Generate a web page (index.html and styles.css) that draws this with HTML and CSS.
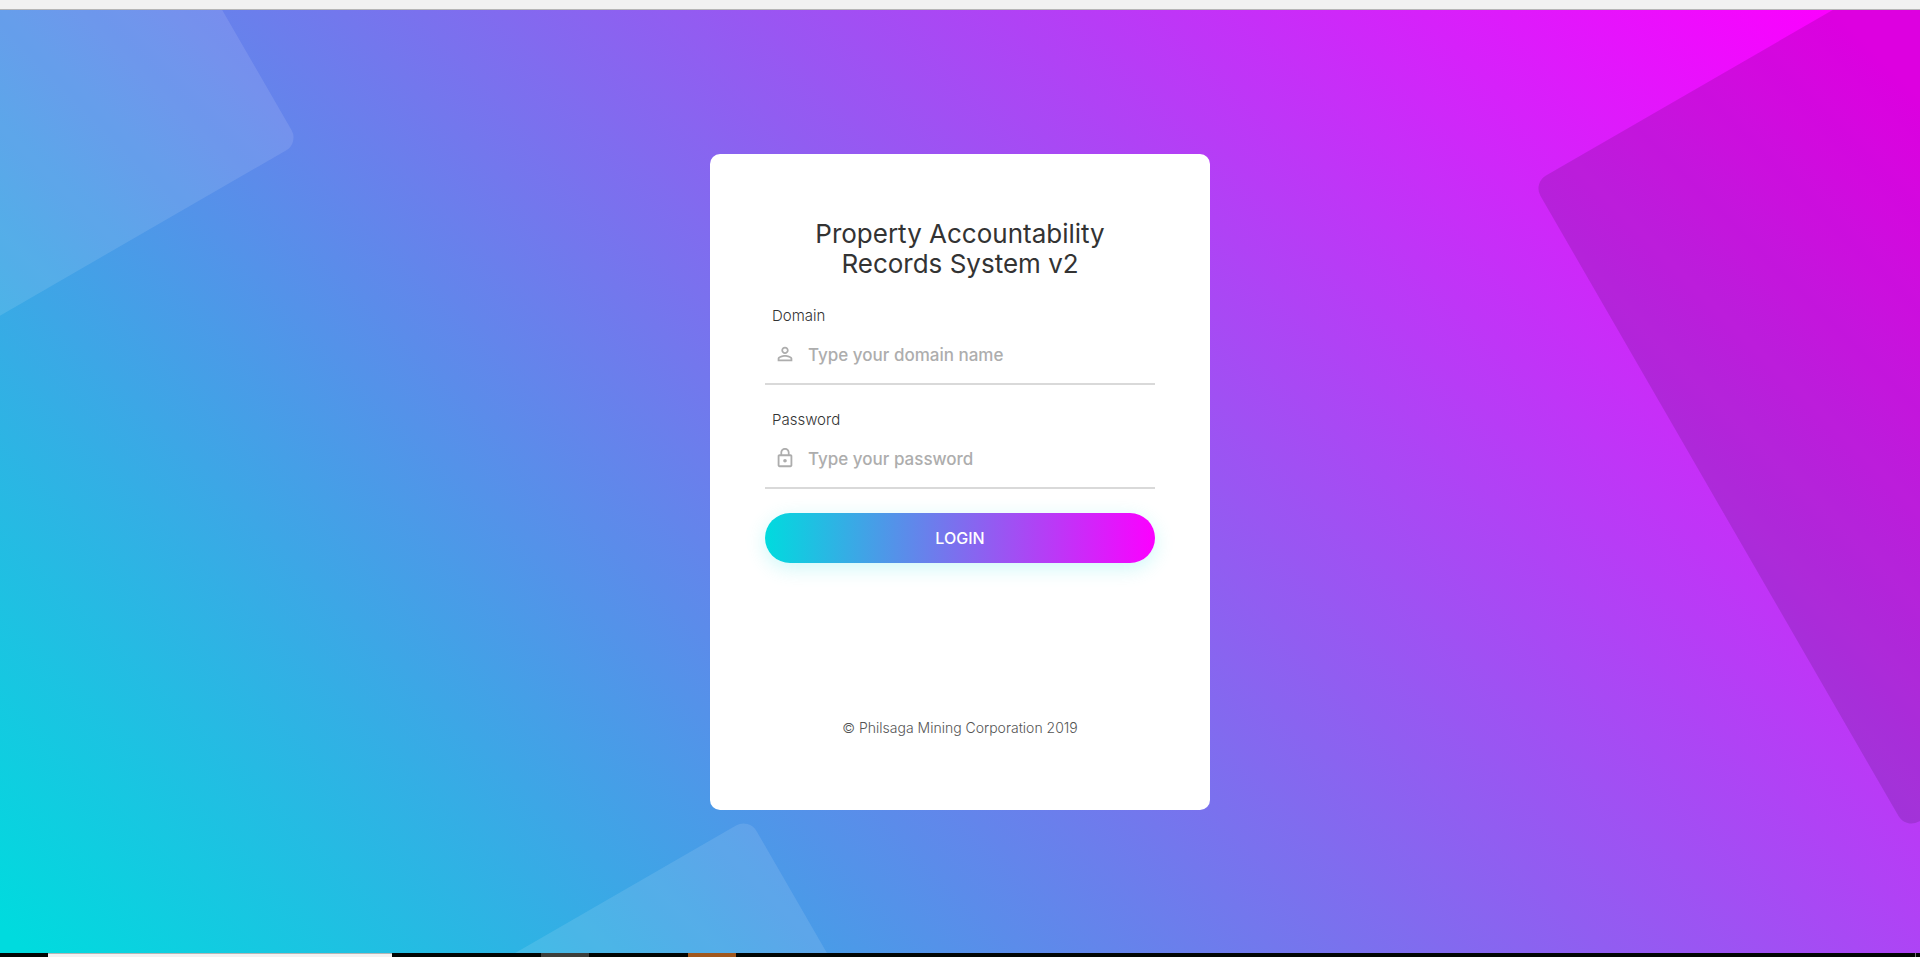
FILE: index.html
```html
<!DOCTYPE html>
<html lang="en">
<head>
<meta charset="utf-8">
<meta name="viewport" content="width=device-width, initial-scale=1">
<title>Property Accountability Records System v2</title>
<link rel="stylesheet" href="styles.css">
</head>
<body>
<div class="top-strip"></div>
<main class="stage">
  <svg class="backdrop" viewBox="0 0 1920 943" preserveAspectRatio="xMidYMid slice" aria-hidden="true">
    <g fill="#fff" fill-opacity=".11">
      <rect x="-700" y="-700" width="700" height="700" rx="15" transform="translate(299 133) rotate(-30)"/>
      <rect x="-700" y="0" width="700" height="700" rx="15" transform="translate(749 808) rotate(-30)"/>
    </g>
    <rect width="900" height="746" rx="15" fill="#000" fill-opacity=".12" transform="translate(1533 173) rotate(-30)"/>
  </svg>
  <form class="card">
    <h1 class="title">Property Accountability Records System v2</h1>
    <div class="field">
      <label class="label" for="domain">Domain</label>
      <div class="control">
        <svg class="icon" viewBox="0 0 24 24" aria-hidden="true"><path d="M12 5.9c1.16 0 2.1.94 2.1 2.1s-.94 2.1-2.1 2.1S9.9 9.16 9.9 8s.94-2.1 2.1-2.1m0 9c2.97 0 6.1 1.46 6.1 2.1v1.1H5.9V17c0-.64 3.13-2.1 6.1-2.1M12 4C9.79 4 8 5.79 8 8s1.79 4 4 4 4-1.79 4-4-1.79-4-4-4zm0 9c-2.67 0-8 1.34-8 4v3h16v-3c0-2.66-5.33-4-8-4z"/></svg>
        <input class="input" id="domain" type="text" placeholder="Type your domain name">
      </div>
    </div>
    <div class="field">
      <label class="label" for="password">Password</label>
      <div class="control">
        <svg class="icon" viewBox="0 0 24 24" aria-hidden="true"><path d="M12 17a2 2 0 1 0 0-4 2 2 0 0 0 0 4zm6-9h-1V6c0-2.76-2.24-5-5-5S7 3.24 7 6v2H6c-1.1 0-2 .9-2 2v10c0 1.1.9 2 2 2h12c1.1 0 2-.9 2-2V10c0-1.1-.9-2-2-2zM8.9 6c0-1.71 1.39-3.1 3.1-3.1s3.1 1.39 3.1 3.1v2H8.9V6zM18 20H6V10h12v10z"/></svg>
        <input class="input" id="password" type="password" placeholder="Type your password">
      </div>
    </div>
    <button class="login" type="submit">LOGIN</button>
    <p class="copyright">© Philsaga Mining Corporation 2019</p>
  </form>
</main>
<div class="taskbar">
  <div class="task task-search"></div>
  <div class="task task-idle"></div>
  <div class="task task-active"></div>
  <div class="task-peek"></div>
</div>
</body>
</html>
```
FILE: styles.css
```css
* {
  box-sizing: border-box;
}

body {
  margin: 0;
  min-height: 100vh;
  display: flex;
  flex-direction: column;
  font-family: Inter, "Open Sans", sans-serif;
}

.top-strip {
  height: 10px;
  background: #f1f1f1;
  border-bottom: 1px solid #b5b5b5;
}

.stage {
  position: relative;
  flex: 1;
  display: flex;
  align-items: center;
  justify-content: center;
  overflow: hidden;
  background: linear-gradient(45deg, #00dbde 1%, #fc00ff 97%);
}

.backdrop {
  position: absolute;
  inset: 0;
  width: 100%;
  height: 100%;
}

.card {
  position: relative;
  width: 500px;
  max-width: 100%;
  padding: 65px 55px 72px;
  border-radius: 10px;
  background: #fff;
}

.title {
  margin: 0 0 23px;
  padding: 0 40px;
  font-size: 26px;
  font-weight: 400;
  line-height: 30px;
  text-align: center;
  color: #333;
}

.field {
  margin-bottom: 21px;
}

.label {
  display: block;
  padding-left: 7px;
  font-size: 15px;
  font-weight: 300;
  line-height: 28px;
  color: #333;
}

.control {
  display: flex;
  align-items: center;
  gap: 12px;
  height: 55px;
  padding-left: 9px;
  border-bottom: 2px solid #d9d9d9;
}

.icon {
  width: 22px;
  height: 22px;
  margin-bottom: 5px;
  fill: #adadad;
}

.input {
  flex: 1;
  min-width: 0;
  height: 100%;
  padding: 0 0 2px;
  border: 0;
  outline: 0;
  background: transparent;
  font: 500 17px Inter, "Open Sans", sans-serif;
  color: #333;
}

.input::placeholder {
  color: #adadad;
  opacity: 1;
}

.login {
  display: block;
  width: 100%;
  height: 50px;
  margin-top: 24px;
  border: 0;
  border-radius: 25px;
  background: linear-gradient(90deg, #00dbde, #fc00ff);
  box-shadow: 0 5px 20px rgba(0, 219, 222, .2);
  font: 500 16px Inter, "Open Sans", sans-serif;
  color: #fff;
}

.copyright {
  margin: 154px 0 0;
  font-size: 14px;
  font-weight: 300;
  line-height: 21px;
  text-align: center;
  color: #555;
}

.taskbar {
  display: flex;
  height: 4px;
  padding: 0 4px 0 48px;
  background: #020604;
}

.task {
  width: 48px;
}

.task-search {
  width: 344px;
  border-top: 1px solid #b5b5b5;
  background: #f2f2f2;
}

.task-idle {
  margin-left: 149px;
  background: #3c3e3a;
}

.task-active {
  margin-left: 99px;
  background: #a0571d;
}

.task-peek {
  width: 1px;
  margin-left: auto;
  background: #777;
}
```
